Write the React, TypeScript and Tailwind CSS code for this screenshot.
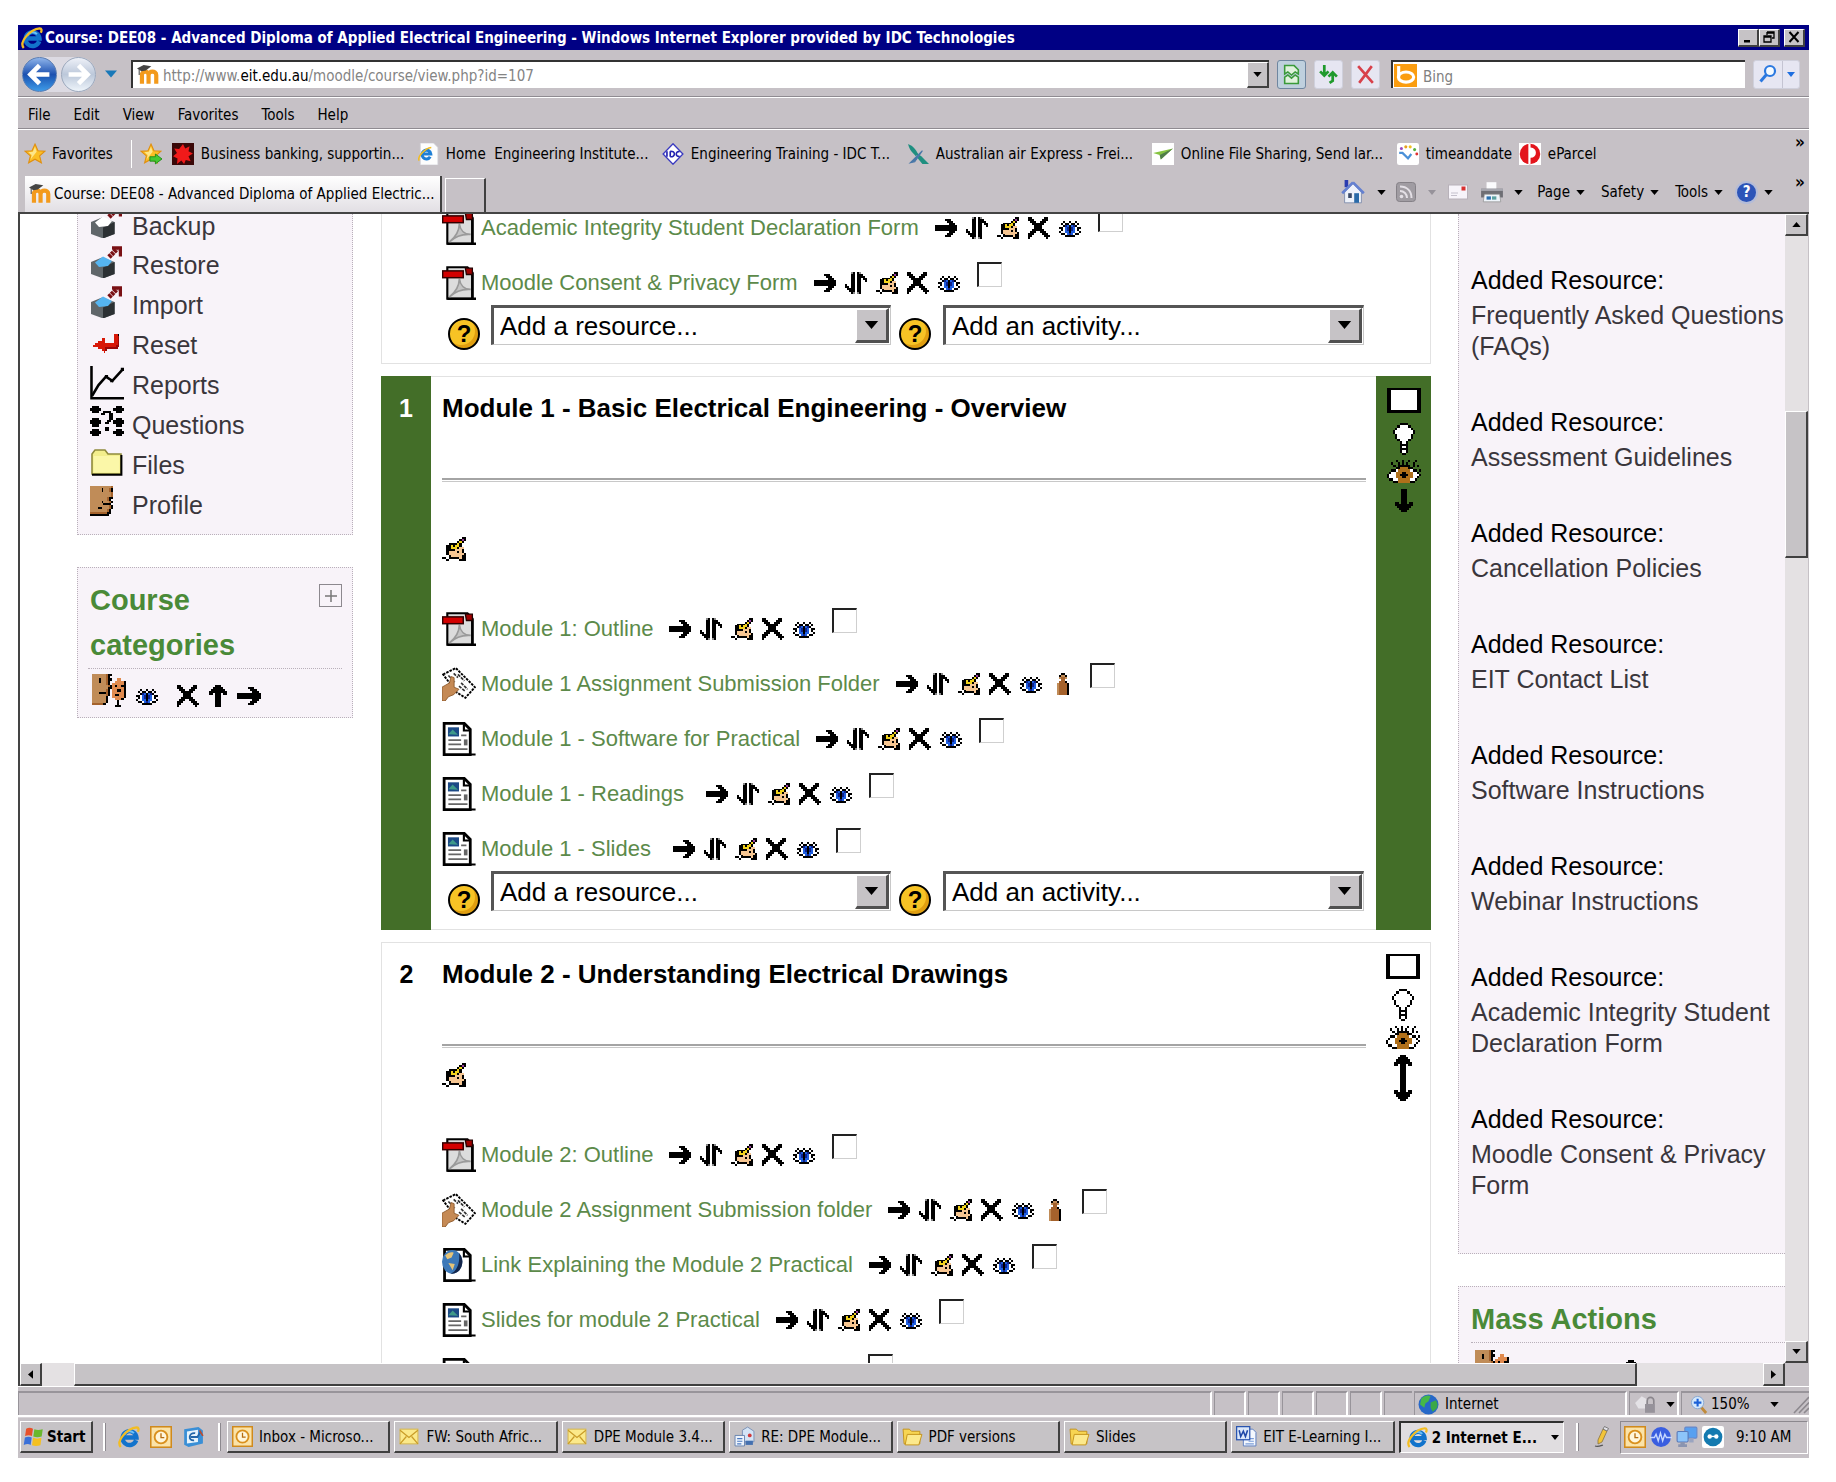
import React, { useState } from "react";

type IconProps = { className?: string };

/* ---------- pixel icons ---------- */

const PALETTE: Record<string, string> = {
  k: "#000000",
  w: "#ffffff",
  y: "#f2d21c",
  o: "#f6c692",
  m: "#9b3fa0",
  b: "#1f5fe0",
  n: "#10238c",
  t: "#a5622c",
  s: "#c08c58",
  r: "#d81808",
  d: "#9a0808",
  g: "#8a8a8a",
  c: "#e08a4e",
  p: "#b0701a",
};

function Pixels({ rows, className }: { rows: string[]; className?: string }) {
  const w = Math.max(...rows.map((r) => r.length));
  return (
    <svg viewBox={`0 0 ${w} ${rows.length}`} className={className} shapeRendering="crispEdges" preserveAspectRatio="none" aria-hidden="true">
      {rows.map((row, y) =>
        row.split("").map((ch, x) => (PALETTE[ch] ? <rect key={`${x}-${y}`} x={x} y={y} width={1} height={1} fill={PALETTE[ch]} /> : null)),
      )}
    </svg>
  );
}

const HAND = [
  ".........kk",
  "........kmk",
  ".......kyk.",
  "...kkkkyk..",
  "..kkykyyk..",
  "..kkyyykoo.",
  "..kkkkoook.",
  "..kooookok.",
  "..koooooook",
  "...koooookk",
  "kk.kkkkkokk",
  "..k.....kkk",
];
const CROSS = [
  "kk......kk.",
  "kkk....kkk.",
  ".kkk..kkk..",
  "..kkkkkk...",
  "...kkkk....",
  "...kkkk....",
  "..kkkkkk...",
  ".kkk..kkk..",
  "kkk....kkk.",
  "kk......kkk",
  "k........k.",
];
const EYE = [
  "...........",
  "...........",
  "..k..k..k..",
  ".k.kk.kk.k.",
  "..knbkbnk..",
  "kkwbnknbwkk",
  ".kwbnknbwk.",
  "k.wbbkbbw.k",
  ".kkwbnbwkk.",
  "...kkkkk...",
  "...........",
];
const RIGHT = [
  "...........",
  ".....kkk...",
  "......kkk..",
  ".......kkk.",
  "kkkkkkkkkkk",
  "kkkkkkkkkkk",
  "kkkkkkkkkkk",
  ".......kkk.",
  "......kkk..",
  ".....kkk...",
  "...........",
];
const UP = [
  "....kkk....",
  "...kkkkk...",
  "..kkkkkkk..",
  ".kkkkkkkkk.",
  ".kk.kkk.kk.",
  "....kkk....",
  "....kkk....",
  "....kkk....",
  "....kkk....",
  "....kkk....",
  "....kkk....",
];
const DOWN = [...UP].reverse();
const UPDOWN = [...UP.slice(0, 10), ...DOWN];
const MOVE = [
  "...gk.kg...",
  "...kk.kkk..",
  "...kk.kkkk.",
  "...kk.kk.kk",
  "...kk.kk..k",
  "...kk.kk...",
  "k..kk.kk...",
  "kk.kk.kk...",
  ".kkkk.kk...",
  "..kkk.kk...",
  "...kg.gk...",
];
const GROUP = [
  ".....kk....",
  "....kssk...",
  "....stts...",
  ".....tt....",
  "....tttk...",
  "...sttttk..",
  "...sttttk..",
  "...sttttk..",
  "...sttttk..",
  "...sttttk..",
  "...sttttk..",
];
const BULB = [
  "...kkkk...",
  "..kwwwwk..",
  ".kwwwwwwk.",
  "kwwwwwwwwk",
  "kwwwwwwwwk",
  ".kwwwwwwk.",
  ".kwwwwwwk.",
  "..kwwwwk..",
  "...kwwk...",
  "...kkkk...",
  "...kwwk...",
  "...kkkk...",
  "...kwwk...",
  "....kk....",
];
const BIG_EYE = [
  "....k..k..k..k..",
  "..k..k.k.k..k...",
  "...k.kkkkkk.k.k.",
  "....kkppppkk....",
  "..kkwppppppwkk.k",
  ".kwwpppkkpppwwk.",
  "kwwwppkkkkppwwwk",
  "kwwwpppkkpppwwk.",
  ".kkwwppppppwwk..",
  "...kkppppppkk...",
];
const HEADS = [
  "sssssstkk.......",
  "sssssstk........",
  "sssksstkk..cc...",
  "sssksstk..cccck.",
  "sssssstk.ccccck.",
  "ssssssstkckcckk.",
  "ssssssskkccccck.",
  "sssssstk.cckkck.",
  "ssskkktk.ccccck.",
  "sssssstk.ckkcck.",
  "ssssssk..ccccck.",
  "ssssssk...ccck..",
  "ssssssk....k....",
  "tttttk.....k....",
  "..........kkk...",
];
const PROFILE = [
  "ssssssssssst",
  "sssssskssstk",
  "sssssskssstk",
  "ssssssssssst",
  "ssssssssssst",
  "ssssssssssst",
  "ssssssssstkk",
  "ssssssssstk.",
  "sssssskssstk",
  "ssssssskkkk.",
  "sssssssssstk",
  "sssskksssstk",
  "ssssssssstk.",
  "ssssssssstk.",
  "tttttttttkk.",
  "kkkkkkkkkk..",
];
const RETURN = [
  "................",
  "................",
  "................",
  "................",
  "............rrk.",
  "............rrd.",
  ".....rr.....rrd.",
  "...rrrr.....rrd.",
  ".rrrrrrrrrrrrrd.",
  "rrrrrrrrrrrrrdd.",
  "...rrrrddddddd..",
  ".....rrd........",
  "......r.........",
];
const DICE = [
  ".kkk........kkk.",
  "kkkkk......kkkkk",
  ".kkk..kkkk..kkk.",
  ".....kk..kk.....",
  ".........kk.....",
  ".kkk.....kk.kkk.",
  "kkkkk...kk.kkkkk",
  "kkkkk..kk..kkkkk",
  ".kkk........kkk.",
  ".......kk.......",
  ".kkk...kk...kkk.",
  "kkkkk......kkkkk",
  ".kkk........kkk.",
];

/* ---------- resource icons ---------- */

function PdfIcon({ className }: IconProps) {
  return (
    <svg viewBox="0 0 16 16" className={className} aria-hidden="true">
      <path d="M2.500 .6H12L14.300 3v12.400h-11.800z" fill="#dcdcdc" stroke="#000" strokeWidth="1" />
      <path d="M14.300 3v12.400H16M2.500 15.400H15" stroke="#000" strokeWidth="1.200" fill="none" />
      <path d="M3.500 14.500c2-1.500 4.500-4 4.700-8.500.3 3 2.300 5 5.300 5-4-.3-7 .7-10 3.500z" fill="#c4c4c4" stroke="#9a9a9a" strokeWidth=".8" />
      <path d="M11 1h3.300v3H11.500z" fill="#a00000" stroke="#200" strokeWidth=".6" />
      <rect x=".3" y="2.300" width="9.700" height="3.200" fill="#d40000" stroke="#300" strokeWidth=".7" />
    </svg>
  );
}

function DocIcon({ className }: IconProps) {
  return (
    <svg viewBox="0 0 16 16" className={className} aria-hidden="true">
      <path d="M1 .700H10.500L13.300 3.500V15.300H1z" fill="#fff" stroke="#000" strokeWidth="1.300" />
      <path d="M10.300 1v3h3M13.300 15.300H15.800" fill="none" stroke="#000" strokeWidth="1" />
      <rect x="2.800" y="2.500" width="5.200" height="4.300" fill="#1d4a86" />
      <path d="M3 5.800l2-2.300 2.500 2.500z" fill="#3f9a8a" />
      <path d="M9 6.300h2.500M3 8.500h6M3 10.500h6M3 12.800h9" stroke="#666" strokeWidth=".8" />
      <rect x="10.300" y="8.200" width="1.700" height="2.800" fill="#666" />
    </svg>
  );
}

function LinkIcon({ className }: IconProps) {
  return (
    <svg viewBox="0 0 16 16" className={className} aria-hidden="true">
      <path d="M1.200 .700H10.500L13.300 3.500V15.300H1.200z" fill="#fff" stroke="#000" strokeWidth="1.300" />
      <path d="M10.300 1v3h3M13.300 15.300H15.800" fill="none" stroke="#000" strokeWidth="1" />
      <ellipse cx="4.800" cy="6.500" rx="4.800" ry="5.600" fill="#3c78b8" />
      <path d="M8 2.300a4.800 5.600 0 0 1-4 9.700c3.500-1 4.500-6 4-9.700z" fill="#14264a" />
      <path d="M1.500 3.500c1.500-1.500 3-1.800 4-1.300l-1 2.300-2 .8zM3 7l3 .5-1 3z" fill="#e6c478" />
    </svg>
  );
}

function AssignmentIcon({ className }: IconProps) {
  return (
    <svg viewBox="0 0 16 16" className={className} aria-hidden="true">
      <path d="M.5 3.500L6.500 .500 15.500 9.500 11 14.500 7 12z" fill="#fff" stroke="#000" strokeWidth=".9" strokeDasharray="1.200 .5" />
      <path d="M3 4l3 3M7.500 3.500l3 3M9 7.500l3 3M8 9l3 2.500M5.500 3l2 2" stroke="#333" strokeWidth=".8" strokeDasharray="1.500 .5" />
      <path d="M0 9.500L3.500 7.500 4.300 4.500 5.700 5v4.500l2.300 1L5.500 13 3 14 1.500 16H0z" fill="#c58a55" stroke="#8a5526" strokeWidth=".4" />
    </svg>
  );
}

const RESOURCE_ICONS = { pdf: PdfIcon, doc: DocIcon, link: LinkIcon, assignment: AssignmentIcon };

function CubeIcon({ className, top }: IconProps & { top: string }) {
  return (
    <svg viewBox="0 0 16 16" className={className} aria-hidden="true">
      <path d="M.5 8L6 5.800 12.300 8v6L6.500 16.200 .5 14z" fill="#60666a" />
      <path d="M6.500 10.800L12.300 8v6L6.500 16.200z" fill="#2c3033" />
      <path d="M2.500 8.300L6.500 5.300 11 7.500 9 10 4.500 10.500z" fill={top} />
      <path d="M9.500 5.500L13.500 1.500" stroke="#7a1014" strokeWidth="2.400" strokeDasharray="1.500 .3" />
      <path d="M11 1h4.300v4.300" stroke="#7a1014" strokeWidth="1.800" fill="none" />
    </svg>
  );
}

function ChartIcon({ className }: IconProps) {
  return (
    <svg viewBox="0 0 16 16" className={className} aria-hidden="true">
      <path d="M.7 0V15.200H16" stroke="#000" strokeWidth="1.200" fill="none" />
      <path d="M1 14L4 9l3.500-4 3 2L15.500 1.500" stroke="#000" strokeWidth="1.200" fill="none" />
      <path d="M14.500 .8h1.500v1.500h-1.500zM7 4.200h1.500v1.500H7zM9.500 6.200H11v1.500H9.500z" />
    </svg>
  );
}

function FolderIcon({ className }: IconProps) {
  return (
    <svg viewBox="0 0 16 16" className={className} aria-hidden="true">
      <path d="M.5 14V4L2 2h5l1.500 2H15v10z" fill="#f3ee8c" stroke="#8f8a3c" strokeWidth=".8" />
      <path d="M1.300 5h13v8.300h-13z" fill="#fbf7a8" />
      <path d="M.5 14.400H15.200V4.500" stroke="#000" strokeWidth="1" fill="none" />
    </svg>
  );
}

function HelpCircle() {
  return (
    <a href="#help" aria-label="Help" className="mt-[13px] flex size-8 shrink-0 items-center justify-center rounded-full border-2 border-black bg-[#f7c325] text-[24px] leading-none font-bold text-black shadow-[inset_-3px_-3px_0_#e09e10]">
      ?
    </a>
  );
}

/* ---------- browser and shell icons ---------- */

function IeIcon({ className }: IconProps) {
  return (
    <svg viewBox="0 0 20 20" className={className} aria-hidden="true">
      <path d="M16.500 13A6.300 6.300 0 1 1 16.800 10.500H6" stroke="#1273cc" strokeWidth="4" fill="none" />
      <path d="M5.500 8A5.500 5.500 0 0 1 14.500 6.500" stroke="#6cc0f8" strokeWidth="1.800" fill="none" />
      <path d="M2.500 19C-2 14 8 2 17 1.200c2 0 2 2 1 4" stroke="#f3bd22" strokeWidth="2.100" fill="none" />
    </svg>
  );
}

function MoodleIcon({ className }: IconProps) {
  return (
    <svg viewBox="0 0 20 20" className={className} aria-hidden="true">
      <path d="M4.500 18V8M4.500 10c0-4 6-4 6 0v8M10.500 10c0-4 7-4 7 0v8" stroke="#f39a1c" strokeWidth="3.800" fill="none" />
      <path d="M0 4L6 1l7 1-5 4-4 .5z" fill="#444" />
      <path d="M2 5v5" stroke="#555" strokeWidth="1" />
    </svg>
  );
}

function StarIcon({ className, add }: IconProps & { add?: boolean }) {
  return (
    <svg viewBox="0 0 20 20" className={className} aria-hidden="true">
      <path d="M10 1l2.700 6 6.300.5-4.800 4.200L15.800 18 10 14.700 4.200 18l1.600-6.300L1 7.500 7.300 7z" fill="#fbbf24" stroke="#e08f10" strokeWidth="1" />
      <path d="M10 3.500l1.500 4.500-4 5-1.500 2 1-4L4 8.500l4-.5z" fill="#fde68a" />
      {add && <path d="M9 12.500h5V10l6 4.500-6 4.500v-2.500H9z" fill="#46c832" stroke="#1d8a16" strokeWidth=".8" />}
    </svg>
  );
}

function NabIcon({ className }: IconProps) {
  return (
    <svg viewBox="0 0 20 20" className={className} aria-hidden="true">
      <rect width="20" height="20" fill="#3a0808" />
      <path d="M10 1l2 4 4-2-1 4.500 4 2-4 2.500 2 4.500-4.500-1-1.500 3.500-2.500-3-4 3 .5-5L1 12l3.500-3L2 5l4.500.5z" fill="#f01a1a" />
    </svg>
  );
}

function IePageIcon({ className }: IconProps) {
  return (
    <svg viewBox="0 0 20 20" className={className} aria-hidden="true">
      <path d="M3 0h12l4 4v16H3z" fill="#fdfdfd" stroke="#d0d0d8" strokeWidth=".7" />
      <path d="M12 12.500A4 4 0 1 1 12.500 10H5" stroke="#1d7fd6" strokeWidth="2.800" fill="none" />
      <path d="M2 16C0 13 7 4.500 13 4" stroke="#f3bd22" strokeWidth="1.400" fill="none" />
    </svg>
  );
}

function IdcIcon({ className }: IconProps) {
  return (
    <svg viewBox="0 0 20 20" className={className} aria-hidden="true">
      <path d="M10 .7L19 10l-9 9.300L1 10z" fill="#fff" stroke="#3a3ac0" strokeWidth="1.200" />
      <path d="M4.500 7.500v5M7.500 7.500v5M7.500 7.500c5-.5 5 5.500 0 5M16 8c-4-1.500-4 5.500 0 4" stroke="#2222b0" strokeWidth="1.500" fill="none" />
    </svg>
  );
}

function AirIcon({ className }: IconProps) {
  return (
    <svg viewBox="0 0 20 20" className={className} aria-hidden="true">
      <path d="M1 1c5 2 7 5 9 9l-2 2C5 9 2 6 1 1z" fill="#1f8f80" />
      <path d="M9 9l4 3 7 7h-6l-5-6z" fill="#1f8f80" />
      <path d="M14 7L3 18l4-1 5-7z" stroke="#4a78a8" strokeWidth="1" fill="#4a78a8" />
    </svg>
  );
}

function SendIcon({ className }: IconProps) {
  return (
    <svg viewBox="0 0 20 20" className={className} aria-hidden="true">
      <rect width="20" height="20" fill="#fff" />
      <path d="M1 9L19 5 8 15 7 11z" fill="#86c440" />
      <path d="M19 5L7 11l1 4z" fill="#4f7d4a" />
    </svg>
  );
}

function TimeIcon({ className }: IconProps) {
  return (
    <svg viewBox="0 0 20 20" className={className} aria-hidden="true">
      <rect width="20" height="20" rx="2" fill="#fff" />
      <path d="M2 9h3l5 5 3-4" stroke="#4a90d8" strokeWidth="2" fill="none" />
      <circle cx="4" cy="5" r="1.400" fill="#9a4ac0" />
      <circle cx="8" cy="3.500" r="1.400" fill="#e8a020" />
      <circle cx="12" cy="3.500" r="1.400" fill="#f0c020" />
      <circle cx="16" cy="6" r="1.400" fill="#58b040" />
      <circle cx="18" cy="10" r="1.300" fill="#e03030" />
    </svg>
  );
}

function ParcelIcon({ className }: IconProps) {
  return (
    <svg viewBox="0 0 20 20" className={className} aria-hidden="true">
      <rect width="20" height="20" fill="#fff" />
      <circle cx="10" cy="10" r="9.300" fill="#e3141c" />
      <path d="M8.500 1v18h2v-5.500c6.500 0 6.500-9.500 0-9.500V1z" fill="#fff" />
    </svg>
  );
}

function HomeIcon({ className }: IconProps) {
  return (
    <svg viewBox="0 0 20 20" className={className} aria-hidden="true">
      <path d="M3 0h3v6H3z" fill="#2a3cb0" />
      <path d="M3 10v9h14v-9l-7-7z" fill="#eef2fa" stroke="#7a88a8" strokeWidth=".7" />
      <path d="M10 2L1 11M10 2l9 9" stroke="#6480d0" strokeWidth="2.200" />
      <path d="M6 11h3v4H6z" fill="#3a4a68" />
      <path d="M11 11h4v8h-4z" fill="#2a6aa8" />
    </svg>
  );
}

function RssIcon({ className }: IconProps) {
  return (
    <svg viewBox="0 0 20 20" className={className} aria-hidden="true">
      <rect x=".5" y=".5" width="19" height="19" rx="3" fill="#a09ca2" stroke="#858187" />
      <circle cx="5.500" cy="14.500" r="1.800" fill="#e4e0e6" />
      <path d="M4 9c4 0 7 3 7 7M4 4.500c7 0 11.500 4.500 11.500 11.500" stroke="#e4e0e6" strokeWidth="2" fill="none" />
    </svg>
  );
}

function MailIcon({ className }: IconProps) {
  return (
    <svg viewBox="0 0 20 16" className={className} aria-hidden="true">
      <rect x=".5" y="1" width="19" height="14" fill="#f7f4fa" stroke="#b8b2ba" />
      <rect x="13.500" y="2.500" width="4" height="4" fill="#d83030" />
      <path d="M3 9h7M3 11.500h6" stroke="#c4c0cc" />
    </svg>
  );
}

function PrinterIcon({ className }: IconProps) {
  return (
    <svg viewBox="0 0 22 20" className={className} aria-hidden="true">
      <path d="M6 1h9v7H6z" fill="#fbfbfd" />
      <path d="M1 7h20v8H1z" fill="#6e6e74" />
      <path d="M1 7h20v2H1z" fill="#a8a8b0" />
      <path d="M4 12h14l1 7H3z" fill="#eef4fa" stroke="#888" strokeWidth=".6" />
      <path d="M6 14h4v3H6z" fill="#2a70b0" />
      <path d="M11 14h4v3h-4z" fill="#5aa0a0" />
    </svg>
  );
}

function OutlookIcon({ className }: IconProps) {
  return (
    <svg viewBox="0 0 20 20" className={className} aria-hidden="true">
      <rect x=".7" y=".7" width="18.600" height="18.600" fill="#fbe3a8" stroke="#d08a1c" strokeWidth="1.400" />
      <circle cx="10" cy="10" r="5.800" fill="#fff6dc" stroke="#d9901e" strokeWidth="1.700" />
      <path d="M10 6.500V10.500h3" stroke="#b56c10" strokeWidth="1.200" fill="none" />
    </svg>
  );
}

function DesktopIcon({ className }: IconProps) {
  return (
    <svg viewBox="0 0 20 20" className={className} aria-hidden="true">
      <path d="M2 3l13-2 4 3v12l-13 3-4-2z" fill="#3a8fd6" />
      <path d="M4.500 5l10-1.500v11L4.500 16z" fill="#e8f4fc" />
      <path d="M12 6.500c-6-1-7 7-1 6.500M8 10h6l3-5" stroke="#2466a8" strokeWidth="1.600" fill="none" />
      <path d="M16 4l3 5" stroke="#c04a2a" strokeWidth="1.500" />
    </svg>
  );
}

function EnvelopeIcon({ className }: IconProps) {
  return (
    <svg viewBox="0 0 20 20" className={className} aria-hidden="true">
      <rect x="1" y="3" width="17" height="14" fill="#fbe98a" stroke="#d8b850" />
      <path d="M1 4l8.500 7L18 4M1 17l6-7M18 17l-6-7" stroke="#c99c28" strokeWidth="1.200" fill="none" />
    </svg>
  );
}

function ReplyIcon({ className }: IconProps) {
  return (
    <svg viewBox="0 0 20 20" className={className} aria-hidden="true">
      <path d="M8 4l5-3 6 4v10H8z" fill="#d4e4f6" stroke="#7088b0" strokeWidth=".8" />
      <path d="M1 9h9v10H1z" fill="#eef4fc" stroke="#5a78a8" strokeWidth=".8" />
      <path d="M3 12h5M3 14.500h5M3 17h4" stroke="#4a78c0" />
      <circle cx="15" cy="9" r="1.800" fill="#d03a3a" />
      <path d="M11 14h7v4h-7z" fill="#4470b0" />
    </svg>
  );
}

function FolderSmallIcon({ className }: IconProps) {
  return (
    <svg viewBox="0 0 20 20" className={className} aria-hidden="true">
      <path d="M1 3h6l2 2h8v12H2z" fill="#f7d552" stroke="#c3921a" strokeWidth=".9" />
      <path d="M5 8h14l-3 10H3z" fill="#fce98c" stroke="#c3921a" strokeWidth=".9" />
    </svg>
  );
}

function WordIcon({ className }: IconProps) {
  return (
    <svg viewBox="0 0 20 20" className={className} aria-hidden="true">
      <path d="M7 3h9l3 3v13H7z" fill="#f4f8fe" stroke="#5a7cc0" strokeWidth=".9" />
      <path d="M12 12h5M12 14.500h5M9 17h8" stroke="#7a9cd8" />
      <rect x=".6" y=".6" width="12.500" height="12.500" fill="#dce8fa" stroke="#2a55b0" strokeWidth="1.200" />
      <path d="M3 4l1.500 6L7 5l2 5L11 4" stroke="#1f48a8" strokeWidth="1.500" fill="none" />
    </svg>
  );
}

function WindowsFlag({ className }: IconProps) {
  return (
    <svg viewBox="0 0 20 20" className={className} aria-hidden="true">
      <path d="M3 2.500C5.500 1 7.500 1.500 9.500 2.500L8.500 9.500C6.500 8.500 4.500 8.500 2 9.500z" fill="#e8502a" />
      <path d="M10.800 3c2.500 1 4.500 1 8 0l-1 7c-3 1-5.500 1-8 0z" fill="#6ab82c" />
      <path d="M1.800 11c2.500-1 4.500-1 6.500 0l-1 7C5.500 17 3.500 17 .7 18z" fill="#3a70d8" />
      <path d="M9.600 11.300c2.500 1 5 1 8 0l-1 7c-3 1-5.500 1-8 0z" fill="#f4c020" />
    </svg>
  );
}

function GlobeIcon({ className }: IconProps) {
  return (
    <svg viewBox="0 0 20 20" className={className} aria-hidden="true">
      <circle cx="10" cy="10" r="9.500" fill="#2768c8" />
      <path d="M3 4.500C6 1 10 .8 12 2l-2 5-3 2-1 4-4-3z" fill="#46b848" />
      <path d="M12 8l5-2c2 3 2 6 .5 8L14 17l-2-4z" fill="#3aa848" />
    </svg>
  );
}

function PenIcon({ className }: IconProps) {
  return (
    <svg viewBox="0 0 16 22" className={className} aria-hidden="true">
      <path d="M10 3l4 2-5 11-4 2v-4z" fill="#f2c43a" stroke="#8a7440" strokeWidth=".8" />
      <path d="M10 3l1.500-2.500 4 2L14 5z" fill="#e4e4ea" stroke="#666" strokeWidth=".8" />
      <path d="M2 20c3 1 5 0 8-1" stroke="#555" strokeWidth="1.200" fill="none" />
    </svg>
  );
}

function WaveIcon({ className }: IconProps) {
  return (
    <svg viewBox="0 0 20 20" className={className} aria-hidden="true">
      <circle cx="10" cy="10" r="9" fill="#3a5ee0" />
      <path d="M0 10.500h4l1.500-3 2 6 2-7 2 7 2-6 1.500 3h5" stroke="#c8d8ff" strokeWidth="1.300" fill="none" />
    </svg>
  );
}

function NetworkIcon({ className }: IconProps) {
  return (
    <svg viewBox="0 0 20 20" className={className} aria-hidden="true">
      <rect x="8" y="1" width="11" height="10" rx="1" fill="#58a0f0" stroke="#6888c8" />
      <path d="M12 11h4v4h-4z" fill="#9aa4c0" />
      <rect x="1" y="5" width="10" height="9.500" rx="1" fill="#8cc4fa" stroke="#5878b8" />
      <path d="M4 14.500h4v2h2V19H2v-2.500h2z" fill="#8a94b0" />
    </svg>
  );
}

function DotsIcon({ className }: IconProps) {
  return (
    <svg viewBox="0 0 20 20" className={className} aria-hidden="true">
      <rect width="20" height="20" rx="2" fill="#fff" />
      <circle cx="10" cy="10" r="8.500" fill="#147ab0" />
      <circle cx="7" cy="9.500" r="2" fill="#fff" />
      <circle cx="13" cy="9.500" r="2" fill="#fff" />
      <path d="M7 9.500h6" stroke="#fff" strokeWidth="1.200" />
    </svg>
  );
}

function Caret({ className }: IconProps) {
  return (
    <svg viewBox="0 0 10 6" className={className ?? "h-[5px] w-[9px] shrink-0 text-black"} aria-hidden="true">
      <path d="M0 0h10L5 6z" fill="currentColor" />
    </svg>
  );
}

/* ---------- browser chrome ---------- */

const ICON = "size-[22px] shrink-0";

function WindowButton({ label, children }: { label: string; children: React.ReactNode }) {
  return (
    <button aria-label={label} className="flex h-[18px] w-[21px] items-center justify-center border-t border-r-2 border-b-2 border-l border-t-white border-r-[#404040] border-b-[#404040] border-l-white bg-[#c6c3c6]">
      <svg viewBox="0 0 12 12" className="size-3" aria-hidden="true">
        {children}
      </svg>
    </button>
  );
}

function TitleBar() {
  return (
    <header className="flex h-[25px] shrink-0 items-center bg-[#000084] pr-1 pl-[3px] text-white">
      <IeIcon className="size-[22px] shrink-0" />
      <h1 className="ml-0.5 flex-1 truncate font-bold">
        Course: DEE08 - Advanced Diploma of Applied Electrical Engineering - Windows Internet Explorer provided by IDC Technologies
      </h1>
      <WindowButton label="Minimize">
        <path d="M2 9h6v2.500H2z" />
      </WindowButton>
      <WindowButton label="Restore">
        <path d="M4 1h7v6H9M4 1v3M4 2h7M1 5h7v6H1zM1 6h7" fill="none" stroke="#000" strokeWidth="1.300" />
      </WindowButton>
      <div className="ml-1">
        <WindowButton label="Close">
          <path d="M1.500 1l9 10M10.500 1l-9 10" stroke="#000" strokeWidth="2" />
        </WindowButton>
      </div>
    </header>
  );
}

function ToolButton({ label, active, children }: { label: string; active?: boolean; children: React.ReactNode }) {
  return (
    <button
      aria-label={label}
      className={
        active
          ? "flex h-[29px] w-[29px] items-center justify-center rounded-[3px] border border-[#6f86a0] bg-[#bfd0de]"
          : "flex h-[29px] w-[29px] items-center justify-center rounded-[3px] border border-[#cfd0dc] bg-[#e6e6f2]"
      }
    >
      <svg viewBox="0 0 20 20" className="size-[21px]" aria-hidden="true">
        {children}
      </svg>
    </button>
  );
}

function AddressRow() {
  const [editing, setEditing] = useState(false);
  const [url, setUrl] = useState("http://www.eit.edu.au/moodle/course/view.php?id=107");
  return (
    <div className="flex h-[47px] shrink-0 items-center border-b border-[#8f8b91] pt-0.5 pr-[9px] pl-1">
      <div className="flex gap-1 rounded-full bg-[#dcdae2]">
        <button aria-label="Back" className="size-[35px] rounded-full border border-[#5a7cb0] bg-linear-to-b from-[#8fb4ea] via-[#1c50b0] to-[#3f9be8]">
          <svg viewBox="0 0 20 20" className="size-full" aria-hidden="true">
            <path d="M16 10H5M10 4.500L4.500 10l5.500 5.500" stroke="#fff" strokeWidth="2.800" fill="none" />
          </svg>
        </button>
        <button aria-label="Forward" className="size-[35px] rounded-full border border-[#9ba8bc] bg-linear-to-b from-[#eef1f8] via-[#bcc8da] to-[#eef4fa]">
          <svg viewBox="0 0 20 20" className="size-full" aria-hidden="true">
            <path d="M4 10h11M10 4.500l5.500 5.500-5.500 5.500" stroke="#fff" strokeWidth="2.800" fill="none" />
          </svg>
        </button>
      </div>
      <button aria-label="Recent pages" className="ml-[7px] p-0.5">
        <Caret className="h-2 w-3 text-[#1878b8]" />
      </button>
      <div className="relative ml-3 flex h-7 min-w-0 flex-1 items-center border-t-2 border-l-2 border-[#333] bg-white">
        <MoodleIcon className="ml-1 size-[22px] shrink-0" />
        {!editing && (
          <span className="pointer-events-none absolute top-1 left-[30px] text-[#848484]">
            http://www.<span className="text-black">eit.edu.au</span>/moodle/course/view.php?id=107
          </span>
        )}
        <input
          aria-label="Address"
          value={editing ? url : ""}
          onChange={(e) => setUrl(e.target.value)}
          onFocus={() => setEditing(true)}
          onBlur={() => setEditing(false)}
          className="ml-1 h-full min-w-0 flex-1 bg-transparent outline-none"
        />
        <button aria-label="Show address list" className="flex h-[26px] w-[22px] items-center justify-center border-t border-r-2 border-b-2 border-l border-t-white border-r-[#404040] border-b-[#404040] border-l-white bg-[#c6c3c6]">
          <Caret />
        </button>
      </div>
      <div className="ml-2 flex gap-2">
        <ToolButton label="Compatibility View" active>
          <path d="M3.500 1.500h9l4 4v4l-3-2-3.500 3-3.500-3-3 2zM3.500 18.500v-6l3-2 3.500 3 3.500-3 3 2v6z" fill="#dff2dc" stroke="#3a9a3a" strokeWidth="1.500" />
        </ToolButton>
        <ToolButton label="Refresh">
          <path d="M6 11V1M2 7l4 4 4-4" stroke="#1f9a2c" strokeWidth="2.600" fill="none" />
          <path d="M14 8v8l-3 2M10 12l4-4 4 4" stroke="#1f9a2c" strokeWidth="2.600" fill="none" />
        </ToolButton>
        <ToolButton label="Stop">
          <path d="M3 2l14 16M16 2L4 18" stroke="#d8404a" strokeWidth="2.500" />
        </ToolButton>
      </div>
      <label className="ml-[11px] flex h-7 w-[354px] items-center border-t-2 border-l-2 border-[#333] bg-white">
        <span aria-hidden="true" className="ml-px flex size-[23px] items-center justify-center bg-[#fb9d10]">
          <svg viewBox="0 0 20 20" className="size-[21px]">
            <path d="M3.500 1v11" stroke="#fff" strokeWidth="3" />
            <ellipse cx="10.500" cy="11.500" rx="7.300" ry="4.800" stroke="#fff" strokeWidth="3" fill="none" />
          </svg>
        </span>
        <input aria-label="Search" placeholder="Bing" className="ml-1.5 h-full min-w-0 flex-1 bg-transparent pt-1 outline-none placeholder:text-[#808080]" />
      </label>
      <div className="ml-2 flex h-[29px] rounded-[3px] border border-[#cfd0dc] bg-[#e6e6f2]">
        <button aria-label="Search" className="flex w-7 items-center justify-center">
          <svg viewBox="0 0 20 20" className="size-5" aria-hidden="true">
            <circle cx="12" cy="7" r="5" stroke="#2a78e0" strokeWidth="2.200" fill="#f4faff" />
            <path d="M8.500 10.500L2.500 17.500" stroke="#2a78e0" strokeWidth="3" />
          </svg>
        </button>
        <button aria-label="Search options" className="flex w-[17px] items-center justify-center border-l border-[#c4c4d2]">
          <Caret className="h-[5px] w-2 text-[#1d6ee0]" />
        </button>
      </div>
    </div>
  );
}

const MENU = ["File", "Edit", "View", "Favorites", "Tools", "Help"];

const FAVORITES: { label: string; icon: (p: IconProps) => React.ReactElement }[] = [
  { label: "Business banking, supportin...", icon: NabIcon },
  { label: "Home  Engineering Institute...", icon: IePageIcon },
  { label: "Engineering Training - IDC T...", icon: IdcIcon },
  { label: "Australian air Express - Frei...", icon: AirIcon },
  { label: "Online File Sharing, Send lar...", icon: SendIcon },
];

function FavoritesBar() {
  return (
    <nav aria-label="Favorites bar" className="flex h-[46px] shrink-0 items-center border-t border-white pt-0.5 pl-1.5 whitespace-pre">
      <button className="flex items-center gap-1.5">
        <StarIcon className="size-[22px]" />
        Favorites
      </button>
      <span className="ml-[18px] h-7 w-px bg-white" />
      <button aria-label="Add to favorites bar" className="ml-2">
        <StarIcon add className="size-[22px]" />
      </button>
      <div className="ml-2.5 flex">
        {FAVORITES.map(({ label, icon: Icon }) => (
          <a key={label} href="#favorite" className="flex w-[245px] items-center gap-[7px]">
            <Icon className={ICON} />
            {label}
          </a>
        ))}
        <a href="#favorite" className="flex w-[122px] items-center gap-[7px]">
          <TimeIcon className={ICON} />
          timeanddate
        </a>
        <a href="#favorite" className="flex items-center gap-[7px]">
          <ParcelIcon className={ICON} />
          eParcel
        </a>
      </div>
      <button aria-label="More favorites" className="mr-1 mb-6 ml-auto text-[17px] leading-5 font-bold">
        »
      </button>
    </nav>
  );
}

function TabRow() {
  return (
    <div className="flex h-[37px] shrink-0 items-end pl-[7px]">
      <button role="tab" aria-selected="true" className="flex h-9 w-[417px] items-center gap-[3px] border-r-2 border-[#404040] bg-linear-to-b from-white to-[#e2dfe4] pl-1 whitespace-nowrap">
        <MoodleIcon className="size-[22px] shrink-0" />
        Course: DEE08 - Advanced Diploma of Applied Electric...
      </button>
      <button aria-label="New tab" className="ml-[3px] h-[34px] w-[41px] border-t border-r-2 border-l border-t-white border-r-[#404040] border-l-white" />
      <div className="ml-auto flex h-full items-center pb-[3px]">
        <button aria-label="Home" className="flex items-center gap-3">
          <HomeIcon className="size-6" />
          <Caret />
        </button>
        <button aria-label="Feeds" className="ml-2.5 flex items-center gap-3">
          <RssIcon className="size-5" />
          <Caret className="h-[5px] w-2 text-[#96929a]" />
        </button>
        <button aria-label="Read mail" className="ml-3">
          <MailIcon className="h-4 w-5" />
        </button>
        <button aria-label="Print" className="ml-3 flex items-center gap-2.5">
          <PrinterIcon className="h-[22px] w-6" />
          <Caret />
        </button>
        <button className="ml-3.5 flex items-center gap-1.5">
          Page <Caret />
        </button>
        <button className="ml-4 flex items-center gap-1.5">
          Safety <Caret />
        </button>
        <button className="ml-4 flex items-center gap-1.5">
          Tools <Caret />
        </button>
        <button aria-label="Help" className="ml-3 flex items-center gap-1.5">
          <span className="flex size-[23px] items-center justify-center rounded-full border-2 border-[#b4bcd8] bg-[#2c54b8] text-[15px] leading-none font-bold text-white">?</span>
          <Caret />
        </button>
        <button aria-label="More commands" className="mr-1 mb-5 ml-[22px] text-[17px] leading-5 font-bold">
          »
        </button>
      </div>
    </div>
  );
}

/* ---------- page content ---------- */

const ADMIN_LINKS: { label: string; icon: React.ReactElement }[] = [
  { label: "Restore", icon: <CubeIcon top="#55b4f0" className="size-8" /> },
  { label: "Import", icon: <CubeIcon top="#55b4f0" className="size-8" /> },
  { label: "Reset", icon: <Pixels rows={RETURN} className="ml-[3px] h-[27px] w-7" /> },
  { label: "Reports", icon: <ChartIcon className="size-[34px]" /> },
  { label: "Questions", icon: <Pixels rows={DICE} className="h-[30px] w-[34px]" /> },
  { label: "Files", icon: <FolderIcon className="h-8 w-[34px]" /> },
  { label: "Profile", icon: <Pixels rows={PROFILE} className="h-[30px] w-[23px]" /> },
];

function LeftColumn() {
  return (
    <aside className="w-[276px] shrink-0">
      <ul className="border-x border-b border-dotted border-[#b9b0ba] bg-[#f8f3f9] pb-2 pl-3">
        <li>
          <a href="#admin" className="flex h-8 items-start text-[25px] leading-6 text-[#3a363c]">
            <span className="-mt-2 w-[42px] shrink-0">
              <CubeIcon top="#ffffff" className="size-8" />
            </span>
            Backup
          </a>
        </li>
        {ADMIN_LINKS.map(({ label, icon }) => (
          <li key={label}>
            <a href="#admin" className="flex h-10 items-start text-[25px] leading-[38px] text-[#3a363c]">
              <span className="w-[42px] shrink-0">{icon}</span>
              {label}
            </a>
          </li>
        ))}
      </ul>
      <section className="mt-8 border border-dotted border-[#b9b0ba] bg-[#f8f3f9] px-2.5 pt-2.5 pb-2.5">
        <div className="flex items-start justify-between border-b border-dotted border-[#b9b0ba]">
          <h2 className="w-[200px] pl-0.5 text-[29px] leading-[45px] font-bold text-[#4a8a38]">Course categories</h2>
          <button aria-label="Show block" className="mt-1.5 flex size-[23px] items-center justify-center border border-[#8c888e] text-[#666]">
            <svg viewBox="0 0 12 12" className="size-3" aria-hidden="true">
              <path d="M6 0v12M0 6h12" stroke="#777" strokeWidth="1.500" />
            </svg>
          </button>
        </div>
        <div className="mt-1 flex items-center pl-1">
          <a href="#roles" aria-label="Assign roles">
            <Pixels rows={HEADS} className="h-[33px] w-9" />
          </a>
          <a href="#hide" aria-label="Hide" className="ml-2 pt-3">
            <Pixels rows={EYE} className="size-[22px]" />
          </a>
          <a href="#delete" aria-label="Delete" className="ml-[19px] pt-3">
            <Pixels rows={CROSS} className="size-[22px]" />
          </a>
          <a href="#up" aria-label="Move up" className="ml-2 pt-3">
            <Pixels rows={UP} className="size-[22px]" />
          </a>
          <a href="#right" aria-label="Move right" className="ml-2 pt-3">
            <Pixels rows={RIGHT} className="h-[22px] w-6" />
          </a>
        </div>
      </section>
    </aside>
  );
}

type Resource = { label: string; icon: keyof typeof RESOURCE_ICONS; groups?: boolean; spaced?: boolean };

const ACTIONS: { name: string; rows: string[] }[] = [
  { name: "Move right", rows: RIGHT },
  { name: "Move", rows: MOVE },
  { name: "Update", rows: HAND },
  { name: "Delete", rows: CROSS },
  { name: "Hide", rows: EYE },
];

const CHECKBOX =
  "mt-[3px] size-[25px] appearance-none self-start border-t-2 border-r border-b border-l-2 border-t-[#222] border-r-[#cfcfcf] border-b-[#cfcfcf] border-l-[#222] bg-white";

function ResourceRow({ label, icon, groups, spaced }: Resource) {
  const Icon = RESOURCE_ICONS[icon];
  return (
    <li className="flex h-12 items-center">
      <a href="#resource" className="flex items-center gap-[5px] text-[22px] whitespace-nowrap text-[#5c8a4a]">
        <Icon className="size-[34px] shrink-0" />
        {label}
      </a>
      <span className={spaced ? "ml-[22px] flex gap-[9px]" : "ml-4 flex gap-[9px]"}>
        {ACTIONS.map(({ name, rows }) => (
          <a key={name} href="#action" aria-label={`${name} ${label}`}>
            <Pixels rows={rows} className="size-[22px]" />
          </a>
        ))}
        {groups && (
          <a href="#action" aria-label={`Groups ${label}`}>
            <Pixels rows={GROUP} className="size-[22px]" />
          </a>
        )}
      </span>
      <input type="checkbox" aria-label={`Select ${label}`} className={`ml-[17px] ${CHECKBOX}`} />
    </li>
  );
}

function DropDown({ label, className }: { label: string; className: string }) {
  return (
    <div className={`relative h-10 min-w-0 ${className}`}>
      <select aria-label={label} className="h-full w-full appearance-none border-t-[3px] border-r border-b border-l-[3px] border-t-[#555] border-r-[#c8c8c8] border-b-[#c8c8c8] border-l-[#555] bg-white pl-1.5 text-[26px] leading-8 text-black">
        <option>{label}</option>
      </select>
      <span className="pointer-events-none absolute top-[3px] right-0.5 bottom-0.5 flex w-[34px] items-center justify-center border-t-2 border-r-[3px] border-b-[3px] border-l-2 border-t-white border-r-[#505050] border-b-[#505050] border-l-white bg-[#c6c3c6]">
        <Caret className="h-2 w-[15px] text-black" />
      </span>
    </div>
  );
}

function AddRow() {
  return (
    <div className="-mt-0.5 flex h-10 items-start pr-0.5 pl-1.5">
      <HelpCircle />
      <DropDown label="Add a resource..." className="ml-[11px] flex-[400]" />
      <div className="ml-2 flex">
        <HelpCircle />
      </div>
      <DropDown label="Add an activity..." className="ml-3 flex-[421]" />
    </div>
  );
}

function SectionTools({ last }: { last: React.ReactElement }) {
  return (
    <>
      <a href="#one" aria-label="Show only this section" className="h-[25px] w-[34px] border-x-4 border-t-2 border-b-[3px] border-black bg-white" />
      <a href="#highlight" aria-label="Highlight" className="mt-2.5">
        <Pixels rows={BULB} className="h-8 w-[22px]" />
      </a>
      <a href="#hide" aria-label="Hide section" className="mt-[5px]">
        <Pixels rows={BIG_EYE} className="h-[23px] w-[34px]" />
      </a>
      <a href="#move" aria-label="Move section" className="mt-1.5">
        {last}
      </a>
    </>
  );
}

function Module({ number, title, current, rows, editGap, last, children, trailing }: {
  number: string;
  title: string;
  current?: boolean;
  rows: Resource[];
  editGap: string;
  last: React.ReactElement;
  children?: React.ReactNode;
  trailing?: React.ReactNode;
}) {
  return (
    <section className="mt-3 flex border-y border-[#e2e2e2]">
      <div className={current ? "-my-px w-[50px] shrink-0 bg-[#436e28] pt-4 text-center text-[25px] leading-8 font-bold text-white" : "w-[50px] shrink-0 border-l border-[#e2e2e2] pt-[15px] text-center text-[25px] leading-8 font-bold text-black"}>
        {number}
      </div>
      <div className="min-w-0 flex-1 pt-[15px] pr-2.5 pb-[18px] pl-[11px]">
        <h2 className="text-[26px] leading-8 font-bold whitespace-nowrap text-black">{title}</h2>
        <hr className="mt-[54px] h-1 border-t-2 border-b border-t-[#a4a4a4] border-b-[#c8c8c8]" />
        <a href="#edit" aria-label={`Edit ${title}`} className={`block w-6 ${editGap}`}>
          <Pixels rows={HAND} className="size-6" />
        </a>
        <ul className="mt-11 flex flex-col gap-[7px]">
          {rows.map((r) => (
            <ResourceRow key={r.label} {...r} />
          ))}
          {trailing}
        </ul>
        {children}
      </div>
      <div className={current ? "-my-px flex w-[55px] shrink-0 flex-col items-center bg-[#436e28] pt-3" : "flex w-[55px] shrink-0 flex-col items-center border-r border-[#e2e2e2] pt-[11px]"}>
        <SectionTools last={last} />
      </div>
    </section>
  );
}

const MODULE_1: Resource[] = [
  { label: "Module 1: Outline", icon: "pdf" },
  { label: "Module 1 Assignment Submission Folder", icon: "assignment", groups: true },
  { label: "Module 1 - Software for Practical", icon: "doc" },
  { label: "Module 1 - Readings", icon: "doc", spaced: true },
  { label: "Module 1 - Slides", icon: "doc", spaced: true },
];

const MODULE_2: Resource[] = [
  { label: "Module 2: Outline", icon: "pdf" },
  { label: "Module 2 Assignment Submission folder", icon: "assignment", groups: true },
  { label: "Link Explaining the Module 2 Practical", icon: "link" },
  { label: "Slides for module 2 Practical", icon: "doc" },
];

function MainColumn() {
  return (
    <main className="ml-[28px] min-w-0 flex-1">
      <section className="-mt-2.5 border-x border-b border-[#e2e2e2] pr-16 pb-[18px] pl-[60px]">
        <ul className="flex flex-col gap-[7px]">
          <ResourceRow label="Academic Integrity Student Declaration Form" icon="pdf" />
          <ResourceRow label="Moodle Consent & Privacy Form" icon="pdf" />
        </ul>
        <AddRow />
      </section>
      <Module number="1" title="Module 1 - Basic Electrical Engineering - Overview" current rows={MODULE_1} editGap="mt-[55px]" last={<Pixels rows={DOWN} className="h-[23px] w-[22px]" />}>
        <AddRow />
      </Module>
      <Module
        number="2"
        title="Module 2 - Understanding Electrical Drawings"
        rows={MODULE_2}
        editGap="mt-[15px]"
        last={<Pixels rows={UPDOWN} className="h-[46px] w-[22px]" />}
        trailing={
          <li className="flex h-12 items-center">
            <DocIcon className="size-[34px] shrink-0" />
            <input type="checkbox" aria-label="Select resource" className={`ml-[392px] ${CHECKBOX}`} />
          </li>
        }
      />
    </main>
  );
}

const ADDED = [
  "Frequently Asked Questions (FAQs)",
  "Assessment Guidelines",
  "Cancellation Policies",
  "EIT Contact List",
  "Software Instructions",
  "Webinar Instructions",
  "Academic Integrity Student Declaration Form",
  "Moodle Consent & Privacy Form",
];

function RightColumn() {
  return (
    <aside className="ml-[27px] w-[327px] shrink-0">
      <ul className="flex flex-col gap-11 border-b border-l border-dotted border-[#b9b0ba] bg-[#f8f3f9] pt-[50px] pb-[52px] pl-3 text-[25px]">
        {ADDED.map((label) => (
          <li key={label}>
            <p className="leading-8 text-black">Added Resource:</p>
            <a href="#added" className="mt-1 block leading-[31px] text-[#3a363c]">
              {label}
            </a>
          </li>
        ))}
      </ul>
      <section className="mt-8 border-t border-l border-dotted border-[#b9b0ba] bg-[#f8f3f9] pt-2.5 pl-3">
        <h2 className="border-b border-dotted border-[#b9b0ba] text-[29px] leading-[45px] font-bold text-[#4a8a38]">Mass Actions</h2>
        <div className="mt-[7px] flex items-start pl-1">
          <Pixels rows={HEADS} className="h-[33px] w-9" />
          <Pixels rows={UP} className="mt-2.5 ml-[109px] size-[22px]" />
        </div>
      </section>
    </aside>
  );
}

/* ---------- scroll bars, status bar, taskbar ---------- */

const RAISED = "border-t border-r-2 border-b-2 border-l border-t-white border-r-[#404040] border-b-[#404040] border-l-white bg-[#c6c3c6]";

function VerticalScrollbar() {
  return (
    <div className="flex w-[23px] shrink-0 flex-col bg-[#e4e1e3]">
      <button aria-label="Scroll up" className={`flex h-[22px] items-center justify-center ${RAISED}`}>
        <Caret className="h-[5px] w-[9px] rotate-180 text-black" />
      </button>
      <div className="flex-[176] basis-0" />
      <div className={`flex-[144] basis-0 ${RAISED}`} />
      <div className="flex-[786] basis-0" />
      <button aria-label="Scroll down" className={`flex h-[22px] items-center justify-center ${RAISED}`}>
        <Caret />
      </button>
    </div>
  );
}

function HorizontalScrollbar() {
  return (
    <div className="flex h-[23px] shrink-0 border-l-2 border-[#444] bg-[#e4e1e3]">
      <button aria-label="Scroll left" className={`flex w-[22px] items-center justify-center ${RAISED}`}>
        <Caret className="h-[5px] w-[9px] rotate-90 text-black" />
      </button>
      <div className="flex-[32] basis-0" />
      <div className={`flex-[1561] basis-0 ${RAISED}`} />
      <div className="flex-[126] basis-0" />
      <button aria-label="Scroll right" className={`flex w-[22px] items-center justify-center ${RAISED}`}>
        <Caret className="h-[5px] w-[9px] -rotate-90 text-black" />
      </button>
      <div className="w-6 bg-[#c6c1c6]" />
    </div>
  );
}

const PANE = "h-full border-t-2 border-r-2 border-l border-t-[#98949a] border-r-white border-l-[#98949a]";

function StatusBar() {
  return (
    <div className="flex h-[31px] shrink-0 items-stretch gap-0.5 border-t border-b-2 border-white pt-1">
      <div className={`flex-1 ${PANE}`} />
      <div className={`w-8 ${PANE}`} />
      <div className={`w-8 ${PANE}`} />
      <div className={`w-8 ${PANE}`} />
      <div className={`w-8 ${PANE}`} />
      <div className={`w-8 ${PANE}`} />
      <div className="w-7 border-t-2 border-l border-[#98949a]" />
      <div className={`flex w-[213px] items-center gap-1.5 pl-[3px] ${PANE}`}>
        <GlobeIcon className="size-[21px]" />
        Internet
      </div>
      <button aria-label="Protected mode" className={`flex w-[50px] items-center gap-2.5 pl-1 ${PANE}`}>
        <svg viewBox="0 0 20 20" className="size-[22px]" aria-hidden="true">
          <path d="M1 9l6-6 5 3-2 8H4z" fill="#e4e2e6" />
          <path d="M12 10V7a3 3 0 0 1 6 0v3" stroke="#8a868c" strokeWidth="1.500" fill="none" />
          <rect x="10" y="10" width="9" height="8" fill="#96929a" />
        </svg>
        <Caret />
      </button>
      <button className="flex w-[128px] items-center border-t-2 border-l border-[#98949a] pl-2">
        <svg viewBox="0 0 20 20" className="size-[19px]" aria-hidden="true">
          <path d="M11 12l6 7" stroke="#c08a3a" strokeWidth="3" />
          <circle cx="8" cy="8" r="6.500" fill="#d4e8fc" stroke="#88a8d0" strokeWidth="1" />
          <path d="M8 4v8M4 8h8" stroke="#1a60d8" strokeWidth="2.200" />
        </svg>
        <span className="ml-0.5">150%</span>
        <Caret className="ml-5 h-[5px] w-[9px] text-black" />
        <svg viewBox="0 0 16 20" className="ml-auto h-5 w-4" aria-hidden="true">
          <path d="M1 19L16 3M6 19L16 8.500M11 19l5-5" stroke="#8c888e" strokeWidth="1.600" />
        </svg>
      </button>
    </div>
  );
}

const TASKS: { label: string; icon: (p: IconProps) => React.ReactElement }[] = [
  { label: "Inbox - Microso...", icon: OutlookIcon },
  { label: "FW: South Afric...", icon: EnvelopeIcon },
  { label: "DPE Module 3.4...", icon: EnvelopeIcon },
  { label: "RE: DPE Module...", icon: ReplyIcon },
  { label: "PDF versions", icon: FolderSmallIcon },
  { label: "Slides", icon: FolderSmallIcon },
  { label: "EIT E-Learning I...", icon: WordIcon },
];

const DIVIDER = "h-7 w-[3px] border-x border-l-white border-r-[#8c888e] bg-white";

function Taskbar() {
  return (
    <footer className="flex h-[41px] shrink-0 items-center border-t border-[#d8d4d8] pb-0.5 pl-0.5 whitespace-nowrap">
      <button className={`flex h-8 w-[73px] items-center gap-[3px] pl-0.5 font-bold ${RAISED}`}>
        <WindowsFlag className="size-[21px]" />
        Start
      </button>
      <span className={`ml-2.5 ${DIVIDER}`} />
      <div className="ml-3 flex gap-2.5">
        <button aria-label="Internet Explorer">
          <IeIcon className="size-[22px]" />
        </button>
        <button aria-label="Outlook">
          <OutlookIcon className="size-[22px]" />
        </button>
        <button aria-label="Show desktop">
          <DesktopIcon className="size-[22px]" />
        </button>
      </div>
      <span className={`ml-3.5 ${DIVIDER}`} />
      <div className="ml-1.5 flex min-w-0 flex-1 gap-1">
        {TASKS.map(({ label, icon: Icon }) => (
          <button key={label} className={`flex h-8 min-w-0 flex-1 basis-0 items-center gap-1.5 overflow-hidden pl-1 ${RAISED}`}>
            <Icon className="size-[21px] shrink-0" />
            {label}
          </button>
        ))}
        <button className="flex h-8 min-w-0 flex-1 basis-0 items-center gap-1 border-t-2 border-r border-b border-l-2 border-t-[#303030] border-r-white border-b-white border-l-[#303030] bg-[#e0dde0] pl-1.5 font-bold">
          <IeIcon className="size-[21px] shrink-0" />2 Internet E...
          <Caret className="mr-1 ml-auto h-[5px] w-2 text-black" />
        </button>
      </div>
      <span className={`ml-3 ${DIVIDER}`} />
      <PenIcon className="ml-3.5 h-[22px] w-4" />
      <div className="mr-px ml-[11px] flex h-[33px] w-[188px] items-center gap-1 border-t border-r border-b border-l border-t-[#8c888e] border-r-white border-b-white border-l-[#8c888e] pl-[3px]">
        <OutlookIcon className={ICON} />
        <WaveIcon className={ICON} />
        <NetworkIcon className={ICON} />
        <DotsIcon className={ICON} />
        <time className="ml-2">9:10 AM</time>
      </div>
    </footer>
  );
}

export default function App() {
  return (
    <div className="flex h-screen flex-col bg-white pt-[25px] pr-[27px] pb-6 pl-[18px] font-['DejaVu_Sans_Condensed','DejaVu_Sans',sans-serif] text-[15px] leading-5 text-black">
      <div className="flex min-h-0 flex-1 flex-col bg-[#c6c1c6]">
        <TitleBar />
        <AddressRow />
        <nav aria-label="Menu bar" className="flex h-8 shrink-0 items-center gap-[23px] border-t border-b border-t-white border-b-[#8f8b91] pt-1 pl-2.5">
          {MENU.map((m) => (
            <button key={m}>{m}</button>
          ))}
        </nav>
        <FavoritesBar />
        <TabRow />
        <div className="flex min-h-0 flex-1 overflow-hidden border-t-2 border-l-2 border-[#444] bg-white font-['Liberation_Sans',Arial,sans-serif]">
          <div className="flex min-w-0 flex-1 items-start overflow-hidden pl-[57px]">
            <LeftColumn />
            <MainColumn />
            <RightColumn />
          </div>
          <VerticalScrollbar />
          <div className="w-px bg-[#c6c1c6]" />
        </div>
        <HorizontalScrollbar />
        <StatusBar />
        <Taskbar />
      </div>
    </div>
  );
}
